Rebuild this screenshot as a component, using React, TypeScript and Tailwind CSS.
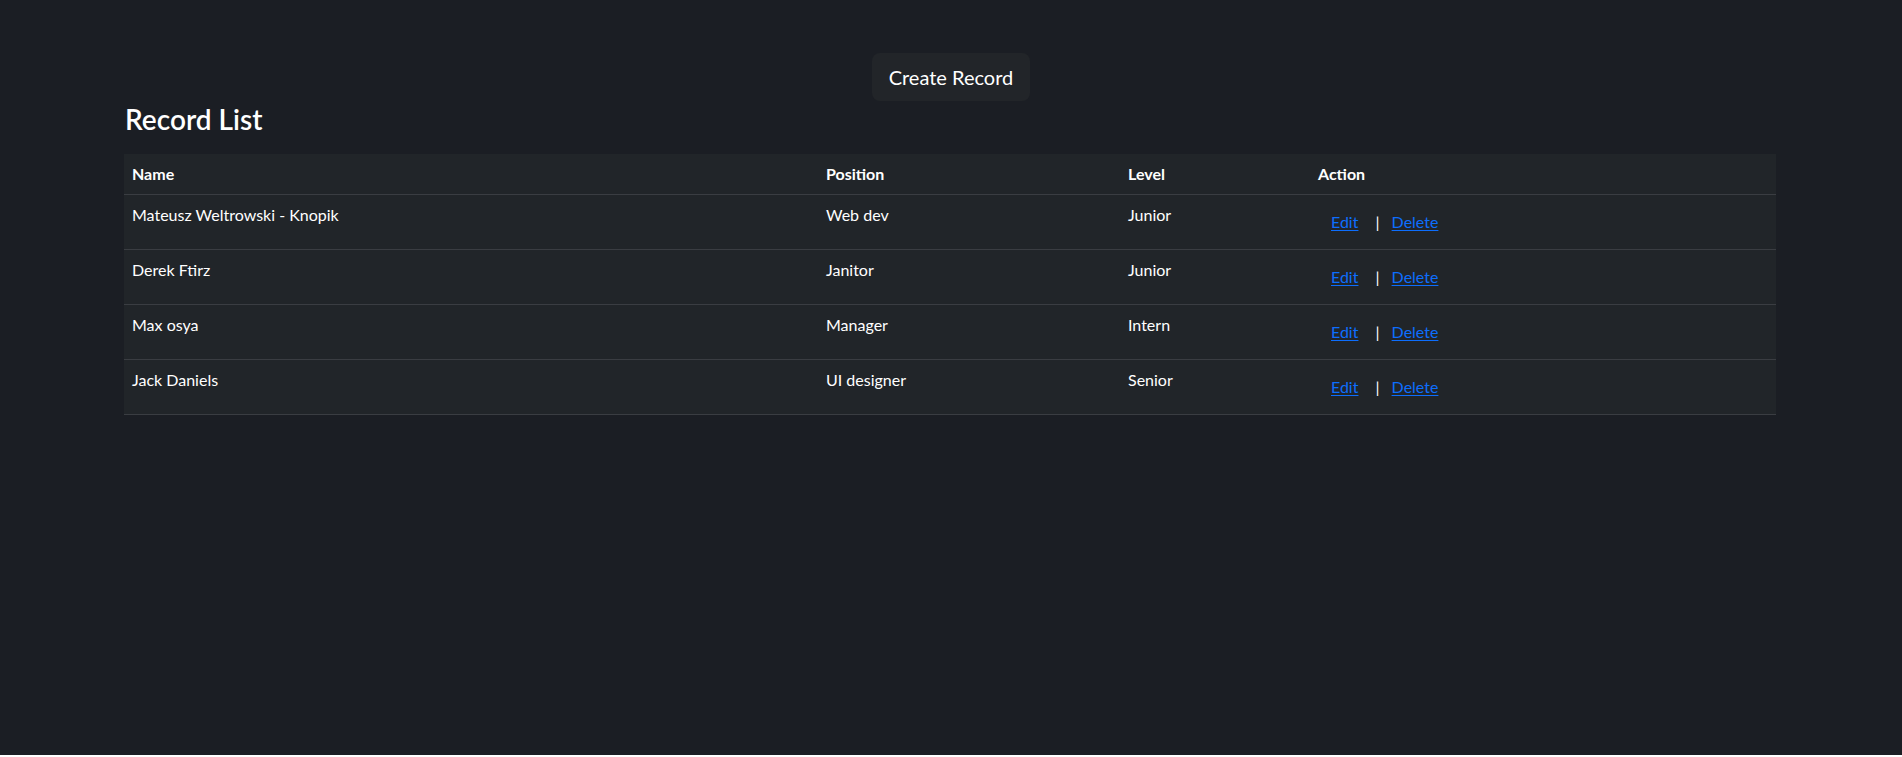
import React from 'react';

type RecordRow = {
  id: number;
  name: string;
  position: string;
  level: string;
};

const records: RecordRow[] = [
  { id: 1, name: 'Mateusz Weltrowski - Knopik', position: 'Web dev', level: 'Junior' },
  { id: 2, name: 'Derek Ftirz', position: 'Janitor', level: 'Junior' },
  { id: 3, name: 'Max osya', position: 'Manager', level: 'Intern' },
  { id: 4, name: 'Jack Daniels', position: 'UI designer', level: 'Senior' },
];

const Record = ({ record }: { record: RecordRow }) => (
  <tr className="border-b border-[#3a3d42] align-top">
    <td className="px-2 py-2 leading-6">{record.name}</td>
    <td className="px-2 py-2 leading-6">{record.position}</td>
    <td className="px-2 py-2 leading-6">{record.level}</td>
    <td className="px-2 py-2 leading-6">
      <button className="border border-transparent px-3 py-[6px] leading-6 text-[#0d6efd] underline underline-offset-2">
        Edit
      </button>{' '}
      |
      <button className="-ml-[1px] border border-transparent px-3 py-[6px] leading-6 text-[#0d6efd] underline underline-offset-2">
        Delete
      </button>
    </td>
  </tr>
);

export default function App() {
  return (
    <div className="min-h-[755px] bg-[#1b1e24] font-['Lato',sans-serif] text-[16px] text-white">
      <div className="flex justify-center pt-[53px]">
        <button className="h-[48px] rounded-lg bg-[#222529] px-[17px] text-[20px] leading-[30px]">
          Create Record
        </button>
      </div>
      <div className="pl-[124px] pr-[126px]">
        <h3 className="pl-[1px] pt-[1px] text-[28px] font-semibold leading-[34px]">Record List</h3>
        <table className="mt-[18px] w-full table-fixed border-collapse bg-[#212529]">
          <colgroup>
            <col className="w-[694px]" />
            <col className="w-[302px]" />
            <col className="w-[190px]" />
            <col />
          </colgroup>
          <thead>
            <tr className="border-b border-[#3a3d42]">
              <th className="px-2 py-2 text-left font-bold leading-6">Name</th>
              <th className="px-2 py-2 text-left font-bold leading-6">Position</th>
              <th className="px-2 py-2 text-left font-bold leading-6">Level</th>
              <th className="px-2 py-2 text-left font-bold leading-6">Action</th>
            </tr>
          </thead>
          <tbody>
            {records.map((record) => (
              <Record key={record.id} record={record} />
            ))}
          </tbody>
        </table>
      </div>
    </div>
  );
}
